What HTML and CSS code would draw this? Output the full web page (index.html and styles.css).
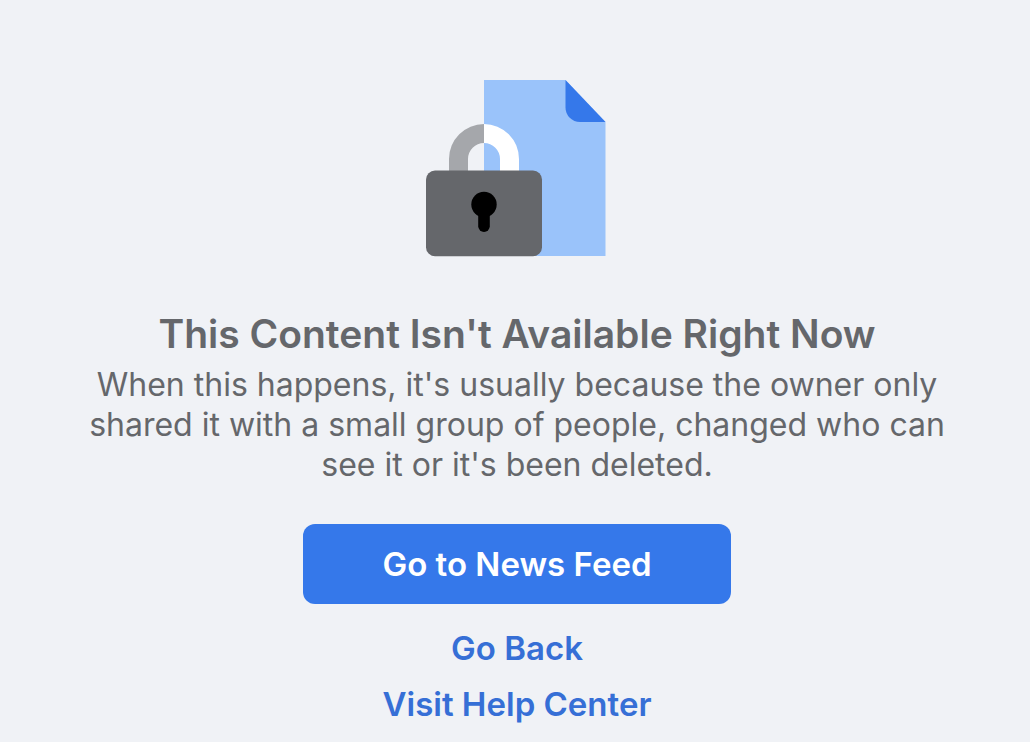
FILE: index.html
```html
<!DOCTYPE html>
<html lang="en">
<head>
    <meta charset="UTF-8">
    <meta name="viewport" content="width=device-width, initial-scale=1.0">
    <title>Content Not Available</title>
    <link rel="stylesheet" href="styles.css">
</head>
<body>
    <main class="error-page">
        <!-- Locked document -->
        <svg class="lock-icon" width="182" height="177" viewBox="0 0 182 177" aria-hidden="true">
            <path fill="#9ac3fa" d="M58 0h81.500l40 42v134H58z"/>
            <path fill="#3578ea" d="M139.500 0l40 42H154a14.500 14.500 0 0 1-14.500-14.500z"/>
            <path fill="#a5a7ab" d="M58 44v19a16 16 0 0 0-16 16v14H23V79a35 35 0 0 1 35-35z"/>
            <path fill="#ffffff" d="M58 44v19a16 16 0 0 1 16 16v14h19V79a35 35 0 0 0-35-35z"/>
            <rect fill="#65676b" y="90.500" width="116" height="85.700" rx="9"/>
            <circle cx="58" cy="124.500" r="12.700"/>
            <rect x="52.200" y="128" width="11.600" height="24" rx="5.800"/>
        </svg>

        <h1 class="title">This Content Isn't Available Right Now</h1>
        <p class="message">When this happens, it's usually because the owner only shared it with a small group of people, changed who can see it or it's been deleted.</p>

        <button class="feed-button" type="button">Go to News Feed</button>
        <a class="link" href="#">Go Back</a>
        <a class="link" href="#">Visit Help Center</a>
    </main>
</body>
</html>
```
FILE: styles.css
```css
* {
    margin: 0;
    padding: 0;
    box-sizing: border-box;
}
body {
    font-family: Inter, Arial, sans-serif;
    background-color: #f0f2f6;
    color: #65676b;
    text-align: center;
}
.error-page {
    display: flex;
    flex-direction: column;
    align-items: center;
    padding: 80px 76px 0 80px;
}
.lock-icon {
    margin-bottom: 53px;
}
.title {
    font-size: 39px;
    line-height: 48px;
    font-weight: 600;
    margin-bottom: 7px;
}
.message {
    font-size: 32px;
    line-height: 40px;
}
.feed-button {
    width: 428px;
    max-width: 100%;
    height: 80px;
    margin: 39px 0 16px;
    border: none;
    border-radius: 12px;
    background-color: #3578ea;
    color: #ffffff;
    font-family: inherit;
    font-size: 33px;
    font-weight: 600;
    cursor: pointer;
}
.link {
    color: #366fd6;
    font-size: 33px;
    line-height: 56px;
    font-weight: 600;
    text-decoration: none;
}
```
